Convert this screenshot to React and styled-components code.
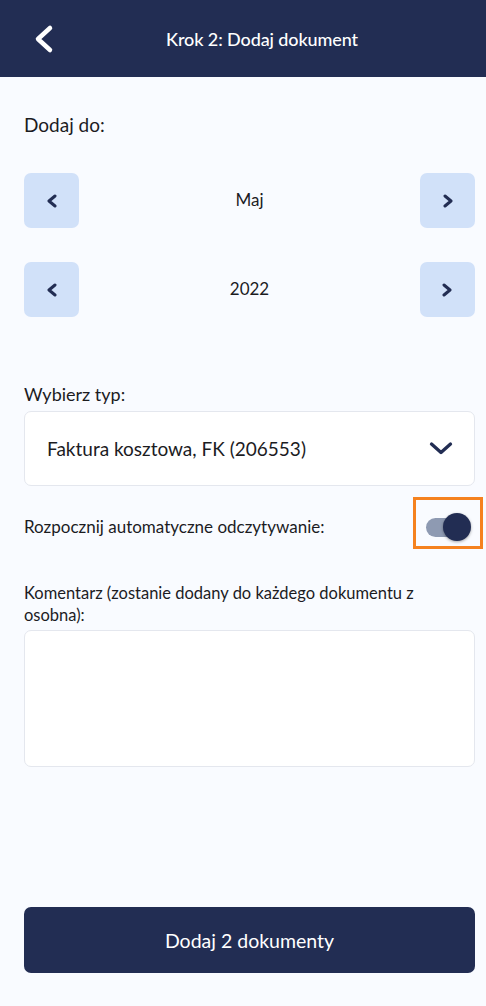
import React from "react";
import styled, { createGlobalStyle } from "styled-components";

const Global = createGlobalStyle`
  html, body { margin: 0; padding: 0; background: #f9fbff; }
  body { font-family: Lato, "Open Sans", sans-serif; color: #1c1c1f; }
  * { box-sizing: border-box; }
`;

const Screen = styled.div`
  width: 486px;
  min-height: 1006px;
  background: #f9fbff;
  display: flex;
  flex-direction: column;
`;

const Header = styled.header`
  height: 77px;
  background: #222d53;
  display: flex;
  align-items: center;
  padding: 0 24px;
`;

const BackButton = styled.button`
  width: 38px;
  height: 38px;
  padding: 0;
  border: none;
  background: transparent;
  display: flex;
  align-items: center;
  justify-content: center;
`;

const Title = styled.h1`
  flex: 1;
  margin: 0;
  text-align: center;
  color: #ffffff;
  font-size: 18px;
  font-weight: 500;
  letter-spacing: -0.1px;
`;

const Content = styled.main`
  flex: 1;
  display: flex;
  flex-direction: column;
  padding: 0 11px 33px 24px;
`;

const Label = styled.div`
  font-size: ${(p) => p.$size || 16}px;
  line-height: ${(p) => p.$lh || 22}px;
  margin-top: ${(p) => p.$mt || 0}px;
  margin-bottom: ${(p) => p.$mb || 0}px;
  color: #1c1c1f;
`;

const Stepper = styled.div`
  display: flex;
  align-items: center;
  justify-content: space-between;
  height: 55px;
  margin-top: ${(p) => p.$mt}px;
`;

const StepButton = styled.button`
  width: 55px;
  height: 55px;
  border: none;
  border-radius: 7px;
  background: #d1e1f9;
  display: flex;
  align-items: center;
  justify-content: center;
  padding: 0;
`;

const StepValue = styled.span`
  font-size: 17px;
  color: #1c1c1f;
  margin-top: -3px;
`;

const Select = styled.div`
  height: 75px;
  background: #ffffff;
  border: 1px solid #e4e7ee;
  border-radius: 7px;
  display: flex;
  align-items: center;
  justify-content: space-between;
  padding: 0 21px 0 22px;
  font-size: 19px;
  color: #1c1c1f;
`;

const ToggleRow = styled.div`
  display: flex;
  align-items: center;
  justify-content: space-between;
  margin-top: 11px;
  height: 52px;
`;

const Highlight = styled.div`
  width: 70px;
  height: 52px;
  margin-right: -8px;
  padding-top: 8px;
  border: 3px solid #f5821f;
  display: flex;
  align-items: center;
  justify-content: center;
`;

const Track = styled.div`
  position: relative;
  width: 40px;
  height: 19px;
  border-radius: 10px;
  background: #8e9ab2;
  margin-left: -4px;
`;

const Knob = styled.div`
  position: absolute;
  top: 50%;
  right: -5px;
  width: 28px;
  height: 28px;
  margin-top: -14px;
  border-radius: 50%;
  background: #222d53;
  box-shadow: 0 1px 3px rgba(0, 0, 0, 0.35);
`;

const TextArea = styled.textarea`
  height: 137px;
  width: 100%;
  background: #ffffff;
  border: 1px solid #e4e7ee;
  border-radius: 7px;
  resize: none;
  font-family: inherit;
  font-size: 16px;
  margin-top: 4px;
  outline: none;
  display: block;
`;

const Submit = styled.button`
  margin-top: auto;
  height: 66px;
  border: none;
  border-radius: 7px;
  background: #222d53;
  color: #ffffff;
  font-family: inherit;
  font-size: 19.5px;
`;

const Chevron = ({ dir, color = "#222d53" }) => {
  const d = dir === "left" ? "M9 2 L3 7 L9 12" : "M3 2 L9 7 L3 12";
  return (
    <svg width="12" height="14" viewBox="0 0 12 14">
      <path d={d} fill="none" stroke={color} strokeWidth="3" strokeLinecap="round" strokeLinejoin="round" />
    </svg>
  );
};

const StepperRow = ({ value, mt }) => (
  <Stepper $mt={mt}>
    <StepButton aria-label="prev">
      <Chevron dir="left" />
    </StepButton>
    <StepValue>{value}</StepValue>
    <StepButton aria-label="next">
      <Chevron dir="right" />
    </StepButton>
  </Stepper>
);

export default function App() {
  return (
    <>
      <Global />
      <Screen>
        <Header>
          <BackButton aria-label="back">
            <svg width="38" height="38" viewBox="0 0 38 38">
              <path d="M26 8 L14 19 L26 30" fill="none" stroke="#ffffff" strokeWidth="4.5" strokeLinecap="round" strokeLinejoin="round" />
            </svg>
          </BackButton>
          <Title>Krok 2: Dodaj dokument</Title>
        </Header>
        <Content>
          <Label $size={19} $lh={24} $mt={36}>Dodaj do:</Label>
          <StepperRow value="Maj" mt={36} />
          <StepperRow value="2022" mt={34} />
          <Label $size={18} $lh={24} $mt={65} $mb={5}>Wybierz typ:</Label>
          <Select>
            <span>Faktura kosztowa, FK (206553)</span>
            <svg width="24" height="15" viewBox="0 0 24 15">
              <path d="M2.5 3 L12 11.5 L21.5 3" fill="none" stroke="#222d53" strokeWidth="3.3" strokeLinecap="round" strokeLinejoin="round" />
            </svg>
          </Select>
          <ToggleRow>
            <Label $size={17} $mt={8}>Rozpocznij automatyczne odczytywanie:</Label>
            <Highlight>
              <Track>
                <Knob />
              </Track>
            </Highlight>
          </ToggleRow>
          <Label $size={16.5} $lh={22} $mt={33}>Komentarz (zostanie dodany do każdego dokumentu z osobna):</Label>
          <TextArea />
          <Submit>Dodaj 2 dokumenty</Submit>
        </Content>
      </Screen>
    </>
  );
}
